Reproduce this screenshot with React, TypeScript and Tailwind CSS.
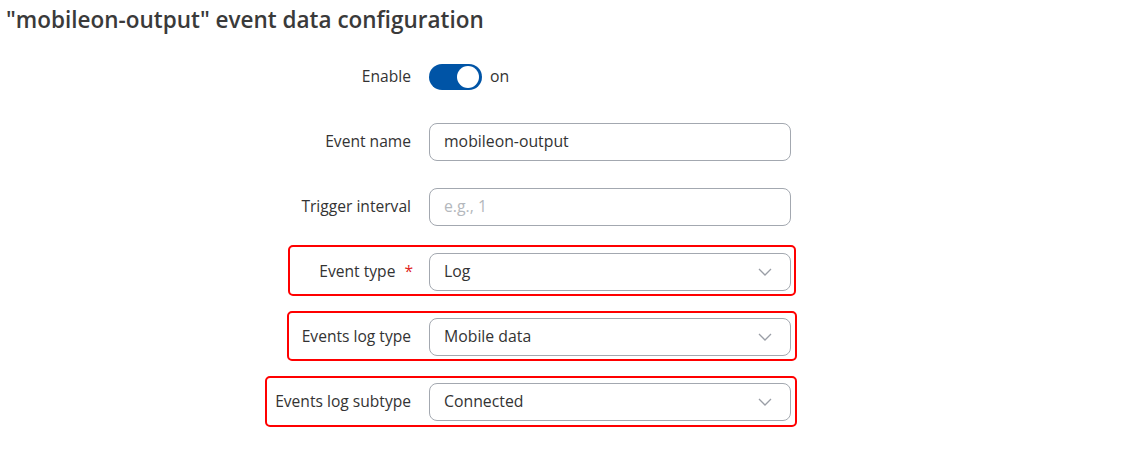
import React from "react";

function Chevron() {
  return (
    <svg width="14" height="8" viewBox="0 0 14 8" className="absolute right-[19px] top-1/2 -translate-y-1/2">
      <path d="M1 1 L7 7 L13 1" fill="none" stroke="#9a9ea6" strokeWidth="1.3" />
    </svg>
  );
}

function Row({ label, required, children, box }: { label: string; required?: boolean; children: React.ReactNode; box?: string }) {
  return (
    <div className="relative flex items-center h-[65px]">
      {box && <div className={`absolute border-2 border-[#ff0000] rounded-[5px] ${box}`} />}
      <div className="w-[411px] text-right text-[15.6px] text-[#333] flex justify-end items-center">
        <span>{label}</span>
        {required && <span className="text-[#e02424] ml-[9px] mr-[-2px]">*</span>}
      </div>
      <div className="ml-[18px] w-[362px] relative">{children}</div>
    </div>
  );
}

const inputCls =
  "w-full h-[38px] border border-[#a3a8b0] rounded-[8px] px-[14px] text-[15.8px] text-[#333] flex items-center bg-white";

export default function App() {
  return (
    <div className="w-[1139px] h-[453px] bg-white" style={{ fontFamily: '"Open Sans", "Noto Sans", sans-serif' }}>
      <h1 className="pl-[6px] pt-[4px] text-[22.5px] font-semibold text-[#3a3a3a] leading-[32px]">
        "mobileon-output" event data configuration
      </h1>
      <div className="mt-[8px]">
        <Row label="Enable">
          <div className="flex items-center">
            <div className="w-[53px] h-[26px] rounded-full bg-[#0054a6] relative">
              <div className="absolute right-[3px] top-[2px] w-[22px] h-[22px] rounded-full bg-white" />
            </div>
            <span className="ml-[8px] text-[15.8px] text-[#333]">on</span>
          </div>
        </Row>
        <Row label="Event name">
          <div className={inputCls}>mobileon-output</div>
        </Row>
        <Row label="Trigger interval">
          <div className={inputCls}>
            <span className="text-[#b4b8bd]">e.g., 1</span>
          </div>
        </Row>
        <Row label="Event type" required box="left-[288px] w-[508px] top-[6px] h-[51px]">
          <div className={inputCls}>Log</div>
          <Chevron />
        </Row>
        <Row label="Events log type" box="left-[287px] w-[510px] top-[7px] h-[50px]">
          <div className={inputCls}>Mobile data</div>
          <Chevron />
        </Row>
        <Row label="Events log subtype" box="left-[265px] w-[532px] top-[7px] h-[51px]">
          <div className={inputCls}>Connected</div>
          <Chevron />
        </Row>
      </div>
    </div>
  );
}
